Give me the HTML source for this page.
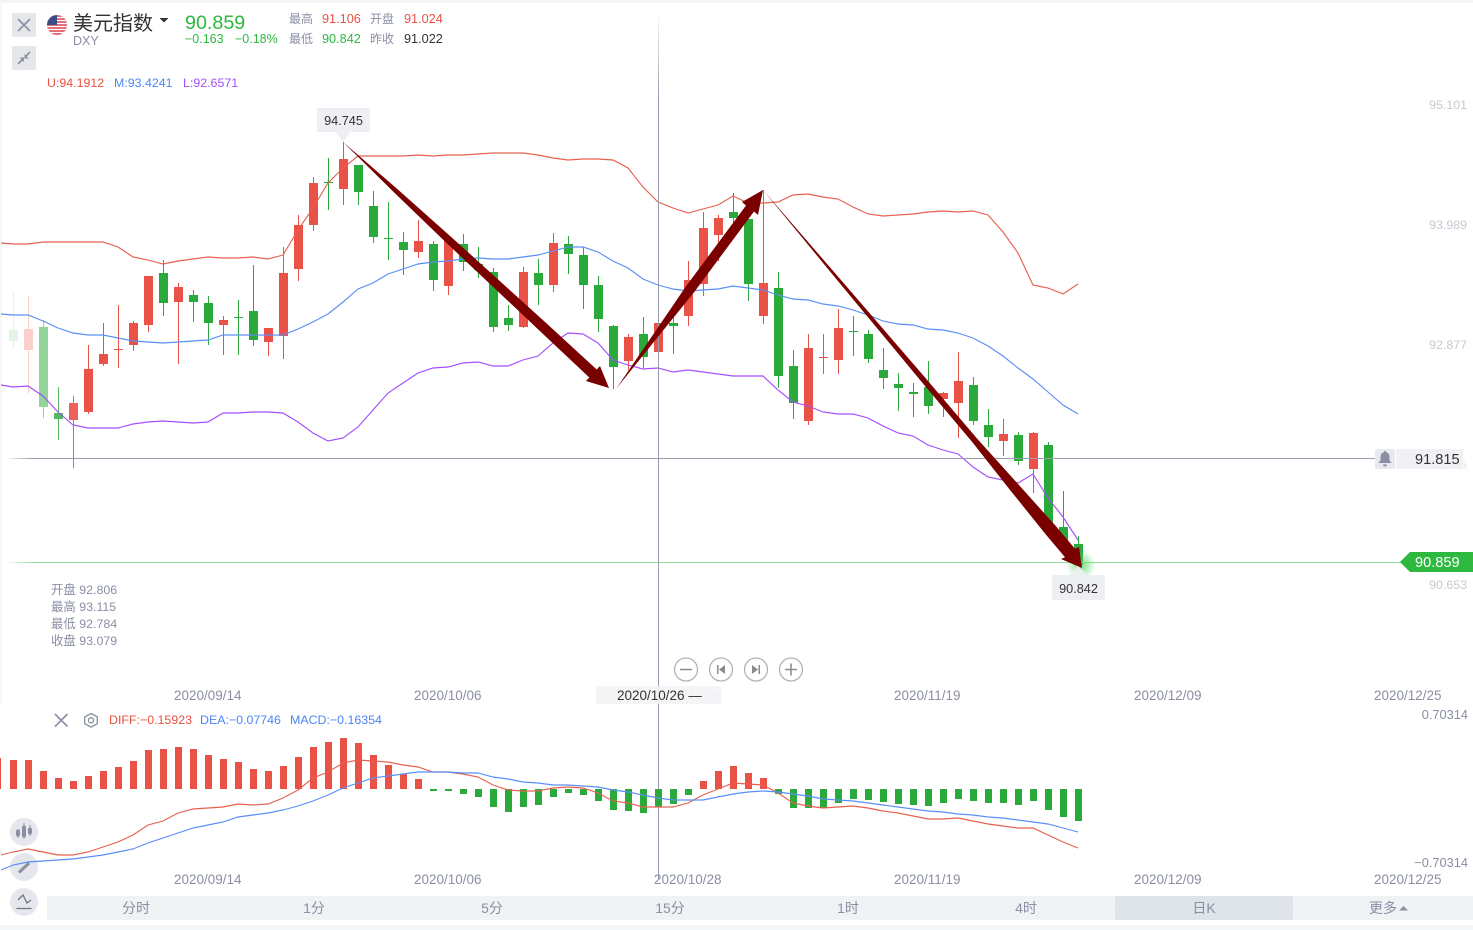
<!DOCTYPE html>
<html lang="zh">
<head>
<meta charset="utf-8">
<title>美元指数 DXY</title>
<style>
html,body{margin:0;padding:0;background:#fff;width:1473px;height:930px;overflow:hidden}
svg{position:absolute;left:0;top:0;display:block}
text{font-family:"Liberation Sans","Noto Sans CJK SC",sans-serif;font-size:12px}
.g{fill:#8a8fa3}.ax{fill:#c6c8d1;text-anchor:end;font-size:12.4px}.d{fill:#8a8fa3;font-size:13.5px}
.v{font-size:12.7px}.m{font-size:12.4px}.r{font-size:12.8px}
.t{fill:#8a8fa3;font-size:14px;text-anchor:middle}
.l{fill:none;stroke-width:1.15}
</style>
</head>
<body>
<svg width="1473" height="930" viewBox="0 0 1473 930" xmlns="http://www.w3.org/2000/svg">
<defs>
<linearGradient id="hg" x1="0" x2="1" y1="0" y2="0"><stop offset="0" stop-color="#9a9cae" stop-opacity="0"/><stop offset=".02" stop-color="#9a9cae"/><stop offset="1" stop-color="#9a9cae"/></linearGradient>
<linearGradient id="gg" x1="0" x2="1" y1="0" y2="0"><stop offset="0" stop-color="#8fe09a" stop-opacity="0"/><stop offset=".02" stop-color="#8fe09a"/><stop offset="1" stop-color="#8fe09a"/></linearGradient>
<linearGradient id="vg" x1="0" x2="0" y1="0" y2="1"><stop offset="0" stop-color="#9a9cae" stop-opacity="0"/><stop offset=".1" stop-color="#9a9cae"/><stop offset="1" stop-color="#9a9cae"/></linearGradient>
<radialGradient id="glow"><stop offset="0" stop-color="#4fd45f" stop-opacity=".75"/><stop offset="1" stop-color="#4fd45f" stop-opacity="0"/></radialGradient>
<clipPath id="fc"><circle cx="57" cy="25" r="10"/></clipPath>
</defs>

<rect width="1473" height="3" fill="#f3f4f7"/>
<rect y="925" width="1473" height="5" fill="#f5f6f8"/>
<rect width="2" height="705" fill="#f7f7fa"/>

<!-- header -->
<rect x="12" y="13" width="24" height="24" rx="2" fill="#e5e7eb"/>
<path d="M18 19L30 31M30 19L18 31" stroke="#8a8fa3" stroke-width="1.6" fill="none"/>
<rect x="12" y="46" width="24" height="24" rx="2" fill="#e5e7eb"/>
<path d="M18 64L22.5 59.5M30 52L25.5 56.5" stroke="#8a8fa3" stroke-width="1.6" fill="none"/>
<path d="M19.5 57.5L24 57.5 24 62zM28.5 58.5L24.5 58.5 24.5 54z" fill="#8a8fa3"/>
<g clip-path="url(#fc)">
<rect x="47" y="15" width="20" height="20" fill="#fff"/>
<path d="M47 16h20M47 19h20M47 22h20M47 25h20M47 28h20M47 31h20M47 34h20" stroke="#d8414e" stroke-width="1.6"/>
<rect x="47" y="15" width="10" height="10" fill="#3c4a86"/>
</g>
<text x="73" y="30" style="font-size:20px" fill="#333">美元指数</text>
<path d="M159.500 18h9l-4.500 4.500z" fill="#333"/>
<text x="73" y="45" class="g" style="font-size:12.500px">DXY</text>
<text x="185" y="29" style="font-size:19.700px" fill="#2db840">90.859</text>
<text x="185" y="43" style="font-size:12.500px" fill="#2db840">−0.163</text>
<text x="235" y="43" style="font-size:12.500px" fill="#2db840">−0.18%</text>
<text x="289" y="23" class="g">最高</text><text x="322" y="23" class="v" fill="#ea5147">91.106</text>
<text x="370" y="23" class="g">开盘</text><text x="404" y="23" class="v" fill="#ea5147">91.024</text>
<text x="289" y="43" class="g">最低</text><text x="322" y="43" class="v" fill="#2db840">90.842</text>
<text x="370" y="43" class="g">昨收</text><text x="404" y="43" class="v" fill="#333">91.022</text>
<text x="47" y="87" class="m" fill="#e8503f">U:94.1912</text>
<text x="114" y="87" class="m" fill="#4a86f7">M:93.4241</text>
<text x="183" y="87" class="m" fill="#a64dff">L:92.6571</text>

<!-- faded candles -->
<g fill="none">
<g stroke="#2aaa3a" opacity=".12"><path d="M13.500 292V348"/><path d="M13.500 330V341" stroke-width="9"/></g>
<g stroke="#ea5147" opacity=".28"><path d="M28.500 296V393"/><path d="M28.500 329V350" stroke-width="9"/></g>
<g stroke="#2aaa3a" opacity=".5"><path d="M43.500 320V418"/><path d="M43.500 327V407" stroke-width="9"/></g>
<g stroke="#2aaa3a" opacity=".8"><path d="M58.500 387V440"/><path d="M58.500 413V419" stroke-width="9"/></g>
<g stroke="#ea5147" opacity=".9"><path d="M73.500 396V468"/><path d="M73.500 403V420" stroke-width="9"/></g>
<!-- red wicks -->
<path stroke="#ea5147" d="M88.500 345V414M103.500 323V366M118.500 305V368M133.500 321V351M148.500 276V332M178.500 283V364M223.500 316V355M268.500 328V356M283.500 247V359M298.500 215V281M313.500 177V231M343.500 142V205M418.500 220V258M448.500 240V295M523.500 267V328M553.500 233V292M628.500 334V370M658.500 320V352M688.500 261V326M703.500 212V296M718.500 215V261M763.500 190V324M808.500 334V425M823.500 334V374M838.500 309V374M943.500 392V417M958.500 352V438M1003.500 419V456M1033.500 432V493"/>
<!-- red bodies -->
<path stroke="#ea5147" stroke-width="9" d="M88.500 369V412M103.500 354V364M118.500 349V350M133.500 323V345M148.500 276V325M178.500 287V302M223.500 320V325M268.500 328V342M283.500 273V336M298.500 225V269M313.500 183V225M343.500 159V189M418.500 241V252M448.500 240V286M523.500 272V327M553.500 243V285M628.500 337V361M658.500 323V352M688.500 280V316M703.500 228V284M718.500 218V235M763.500 283V316M808.500 348V421M823.500 357V358M838.500 328V360M943.500 393V399M958.500 381V403M1003.500 434V441M1033.500 433V469"/>
<!-- green wicks -->
<path stroke="#2aaa3a" d="M163.500 260V316M193.500 290V322M208.500 296V345M238.500 300V355M253.500 265V346M328.500 158V210M358.500 165V205M373.500 191V243M388.500 202V260M403.500 232V275M433.500 241V291M463.500 234V271M478.500 247V278M493.500 268V332M508.500 305V331M538.500 259V305M568.500 236V274M583.500 247V309M598.500 276V332M613.500 325V389M643.500 317V368M673.500 313V354M733.500 193V223M748.500 219V301M778.500 272V388M793.500 350V419M853.500 316V356M868.500 330V363M883.500 348V389M898.500 373V411M913.500 383V417M928.500 361V414M973.500 377V425M988.500 409V447M1018.500 432V465M1048.500 442V525M1063.500 491V548M1078.500 536V565"/>
<!-- green bodies -->
<path stroke="#2aaa3a" stroke-width="9" d="M163.500 273V303M193.500 295V302M208.500 303V323M238.500 317V318M253.500 311V340M328.500 182V183M358.500 165V192M373.500 206V237M388.500 238V239M403.500 242V250M433.500 244V280M463.500 244V262M478.500 264V270M493.500 272V327M508.500 318V325M538.500 273V285M568.500 244V254M583.500 255V285M598.500 285V319M613.500 326V367M643.500 334V357M673.500 323V326M733.500 212V218M748.500 219V284M778.500 288V376M793.500 366V403M853.500 331V332M868.500 334V359M883.500 370V378M898.500 384V388M913.500 392V394M928.500 387V406M973.500 385V421M988.500 425V437M1018.500 435V461M1048.500 445V525M1063.500 527V548M1078.500 544V565"/>
</g>

<!-- bands -->
<polyline class="l" stroke="#e8604f" points="1,243 13,244 28,244 43,242 58,242 73,242 88,242 103,242 118,247 133,257 148,260 163,264 178,261 193,259 208,257 223,258 238,258 253,257 268,259 283,255 298,230 313,208 328,183 343,168 358,156 373,156 388,156 403,156 418,155 433,156 448,155 463,155 478,154 493,153 508,153 523,153 538,155 553,158 568,160 583,159 598,159 613,160 628,168 643,187 658,202 673,208 688,213 703,209 718,205 733,196 748,203 763,203 778,202 793,195 808,194 823,197 838,199 853,207 868,214 883,216 898,215 913,214 928,212 943,211 958,212 973,211 988,215 1003,232 1018,253 1033,285 1048,288 1063,294 1078,284"/>
<polyline class="l" stroke="#5a8ff7" points="1,314 13,315 28,315 43,321 58,328 73,333 88,335 103,335 118,338 133,341 148,342 163,343 178,342 193,341 208,340 223,335 238,335 253,335 268,335 283,335 298,329 313,322 328,314 343,302 358,289 373,283 388,274 403,269 418,264 433,262 448,261 463,259 478,258 493,259 508,259 523,257 538,255 553,251 568,247 583,247 598,252 613,261 628,268 643,279 658,285 673,289 688,291 703,290 718,289 733,286 748,288 763,290 778,295 793,299 808,300 823,304 838,306 853,310 868,315 883,321 898,324 913,325 928,329 943,330 958,333 973,338 988,346 1003,356 1018,368 1033,379 1048,392 1063,405 1078,414"/>
<polyline class="l" stroke="#a64dff" points="1,385 13,387 28,386 43,396 58,412 73,425 88,428 103,428 118,428 133,424 148,422 163,421 178,422 193,423 208,422 223,413 238,413 253,412 268,412 283,413 298,422 313,433 328,441 343,438 358,427 373,410 388,393 403,383 418,373 433,368 448,367 463,363 478,362 493,366 508,366 523,360 538,356 553,343 568,333 583,334 598,343 613,360 628,365 643,369 658,368 673,372 688,370 703,372 718,374 733,376 748,376 763,376 778,390 793,402 808,406 823,412 838,414 853,414 868,418 883,426 898,433 913,436 928,445 943,450 958,454 973,467 988,477 1003,480 1018,483 1033,474 1048,498 1063,517 1078,540"/>

<!-- crosshairs and price lines -->
<rect x="5" y="458" width="1370" height="1" fill="url(#hg)"/>
<rect x="5" y="562" width="1396" height="1" fill="url(#gg)"/>
<rect x="658" y="10" width="1" height="870" fill="url(#vg)"/>

<circle cx="1081" cy="565" r="15" fill="url(#glow)"/>

<!-- drawn arrows -->
<polygon fill="#7a0000" points="343,142 397,188.800 453,238.600 546.400,323.300 596.700,369.500 600,366 609,388 586,381 589.300,377.500 539.600,330.700 448,244.400 394,192.400"/>
<polygon fill="#7a0000" points="616,389 661.600,322.100 685.700,286.700 746,205.500 742,202 763,190 758,215 754,211.500 693.700,292.700 666.800,325.900"/>
<polygon fill="#7a0000" points="763,190 840.100,279 925.700,378.300 977.100,438.600 1017.800,483.800 1055.600,525.800 1075,548.800 1079,547 1082,568 1061,559 1065,557.200 1045.600,534.200 1010.200,490.200 972.500,442.400 921.500,381.700 837.900,281"/>

<!-- tooltips -->
<path d="M317 108h53v24h-20l-7 10-7-10h-19z" fill="#eceef1" opacity=".95"/>
<text x="343.500" y="125" text-anchor="middle" class="v" fill="#333">94.745</text>
<path d="M1052 575h17l9-9 9 9h18v25h-53z" fill="#eceef1" opacity=".95"/>
<text x="1078.500" y="593" text-anchor="middle" class="v" fill="#333">90.842</text>

<!-- axis labels -->
<text x="1467" y="109" class="ax">95.101</text>
<text x="1467" y="229" class="ax">93.989</text>
<text x="1467" y="349" class="ax">92.877</text>
<text x="1467" y="589" class="ax">90.653</text>
<text x="1467" y="469" class="ax" opacity=".5">91.765</text>

<rect x="1375" y="449" width="20" height="20" rx="2" fill="#e8e9ee"/>
<path d="M1385 451a1.200 1.200 0 0 1 1.200 1.200c2.500.7 3.300 2.800 3.300 5v3l2 2.800h-13l2-2.800v-3c0-2.200.8-4.300 3.300-5A1.200 1.200 0 0 1 1385 451z" fill="#8a8fa3"/>
<path d="M1383 464.500h4a2 2 0 0 1-4 0z" fill="#8a8fa3"/>
<rect x="1396" y="449" width="67" height="20" fill="#eff0f4" opacity=".9"/>
<text x="1415" y="464" style="font-size:14.600px" fill="#333">91.815</text>
<polygon points="1400,562 1410,552 1473,552 1473,572 1410,572" fill="#2db840"/>
<text x="1415" y="567" style="font-size:14.600px" fill="#fff">90.859</text>

<!-- OHLC -->
<text x="51" y="594" class="g m">开盘 92.806</text>
<text x="51" y="611" class="g m">最高 93.115</text>
<text x="51" y="628" class="g m">最低 92.784</text>
<text x="51" y="645" class="g m">收盘 93.079</text>

<!-- nav buttons -->
<g fill="none" stroke="#b4b4b4" stroke-width="1.300">
<circle cx="686" cy="669.500" r="11.500"/><circle cx="721" cy="669.500" r="11.500"/><circle cx="756" cy="669.500" r="11.500"/><circle cx="791" cy="669.500" r="11.500"/>
</g>
<path d="M680 669.500h12M785 669.500h12M791 663.500v12" stroke="#8c8c8c" stroke-width="1.600" fill="none"/>
<path d="M717 665h1.500v9H717zM725 665v9l-6-4.500zM760 665h-1.500v9h1.500zM752 665v9l6-4.500z" fill="#8c8c8c"/>

<!-- date axis -->
<text x="174" y="700" class="d">2020/09/14</text>
<text x="414" y="700" class="d">2020/10/06</text>
<text x="654" y="700" class="d" opacity=".3">2020/10/28</text>
<rect x="596" y="686" width="125" height="18" fill="#f2f3f5" opacity=".85"/>
<text x="617" y="700" style="font-size:13.500px" fill="#333">2020/10/26 —</text>
<text x="894" y="700" class="d">2020/11/19</text>
<text x="1134" y="700" class="d">2020/12/09</text>
<text x="1374" y="700" class="d">2020/12/25</text>

<!-- MACD header -->
<path d="M55 714L67.500 726.500M67.500 714L55 726.500" stroke="#8a8fa3" stroke-width="1.600" fill="none"/>
<path d="M91 713.500l6.300 3.400v6.800l-6.300 3.400-6.300-3.400v-6.800z" fill="none" stroke="#8a8fa3" stroke-width="1.300"/>
<circle cx="91" cy="720.300" r="2.600" fill="none" stroke="#8a8fa3" stroke-width="1.300"/>
<text x="109" y="724" class="m" fill="#e8503f">DIFF:−0.15923</text>
<text x="200" y="724" class="m" fill="#4a86f7">DEA:−0.07746</text>
<text x="290" y="724" class="m" fill="#4a86f7">MACD:−0.16354</text>
<text x="1468" y="719" class="g r" text-anchor="end">0.70314</text>
<text x="1468" y="867" class="g r" text-anchor="end">−0.70314</text>

<!-- side buttons -->
<circle cx="24" cy="832" r="14" fill="#e5e7ec"/>
<circle cx="24" cy="867" r="14" fill="#e5e7ec"/>
<circle cx="24" cy="902" r="14" fill="#e5e7ec"/>
<g fill="#8a8fa3" stroke="#8a8fa3">
<rect x="16.500" y="830" width="3" height="6" rx="1.500"/>
<rect x="22.500" y="826" width="3" height="11" rx="1.500"/>
<rect x="28.500" y="828" width="3" height="6" rx="1.500"/>
<path d="M18 829v9M24 823v16M30 825v11" fill="none" stroke-width="1"/>
</g>
<path d="M19 872.500L29 863" stroke="#8a8fa3" stroke-width="3" fill="none"/>
<path d="M18 900l5-5 4 8 4-3M16.500 908.500h15" stroke="#6f7488" stroke-width="1.300" fill="none"/>

<!-- MACD histogram -->
<path fill="none" stroke="#ea5147" stroke-width="7" d="M-2.500 789V758M13.500 789V760M28.500 789V760M43.500 789V771M58.500 789V778M73.500 789V781M88.500 789V776M103.500 789V771M118.500 789V767M133.500 789V761M148.500 789V750M163.500 789V749M178.500 789V747M193.500 789V749M208.500 789V755M223.500 789V759M238.500 789V762M253.500 789V769M268.500 789V771M283.500 789V766M298.500 789V757M313.500 789V747M328.500 789V742M343.500 789V738M358.500 789V743M373.500 789V755M388.500 789V765M403.500 789V774M418.500 789V779M703.500 789V781M718.500 789V771M733.500 789V766M748.500 789V773M763.500 789V778"/>
<path fill="none" stroke="#2aaa3a" stroke-width="7" d="M433.500 789V791M448.500 789V791M463.500 789V794M478.500 789V797M493.500 789V807M508.500 789V812M523.500 789V807M538.500 789V805M553.500 789V797M568.500 789V793M583.500 789V795M598.500 789V801M613.500 789V810M628.500 789V811M643.500 789V813M658.500 789V807M673.500 789V804M688.500 789V795M778.500 789V794M793.500 789V808M808.500 789V808M823.500 789V808M838.500 789V803M853.500 789V799M868.500 789V800M883.500 789V802M898.500 789V804M913.500 789V805M928.500 789V806M943.500 789V803M958.500 789V799M973.500 789V801M988.500 789V803M1003.500 789V803M1018.500 789V805M1033.500 789V801M1048.500 789V810M1063.500 789V817M1078.500 789V821"/>
<polyline class="l" stroke="#e8604f" points="1,855 13,852 28,849 43,852 58,855 73,855 88,852 103,847 118,842 133,835 148,825 163,821 178,813 193,809 208,808 223,807 238,804 253,805 268,804 283,798 298,790 313,778 328,772 343,763 358,760 373,761 388,762 403,765 418,767 433,772 448,772 463,774 478,777 493,785 508,790 523,791 538,791 553,788 568,787 583,788 598,793 613,801 628,803 643,807 658,807 673,807 688,803 703,795 718,789 733,783 748,784 763,785 778,793 793,803 808,806 823,808 838,807 853,806 868,808 883,811 898,813 913,816 928,819 943,819 958,818 973,821 988,824 1003,826 1018,828 1033,828 1048,835 1063,842 1078,848"/>
<polyline class="l" stroke="#5a8ff7" points="1,870 13,865 28,862 43,861 58,860 73,859 88,857 103,855 118,852 133,849 148,843 163,838 178,833 193,828 208,825 223,822 238,817 253,815 268,813 283,810 298,806 313,801 328,795 343,788 358,783 373,778 388,776 403,774 418,772 433,772 448,772 463,773 478,773 493,777 508,779 523,782 538,783 553,785 568,785 583,786 598,787 613,790 628,792 643,795 658,798 673,800 688,800 703,800 718,797 733,794 748,792 763,791 778,792 793,794 808,796 823,799 838,800 853,801 868,803 883,805 898,807 913,809 928,811 943,812 958,814 973,815 988,817 1003,818 1018,820 1033,822 1048,824 1063,828 1078,832"/>

<!-- lower dates -->
<text x="174" y="884" class="d">2020/09/14</text>
<text x="414" y="884" class="d">2020/10/06</text>
<text x="654" y="884" class="d">2020/10/28</text>
<text x="894" y="884" class="d">2020/11/19</text>
<text x="1134" y="884" class="d">2020/12/09</text>
<text x="1374" y="884" class="d">2020/12/25</text>

<!-- tabs -->
<rect x="47" y="896" width="1426" height="24" fill="#f1f2f5"/>
<rect x="1115" y="896" width="178" height="24" rx="2" fill="#dfe3ea"/>
<text x="136" y="913" class="t">分时</text>
<text x="314" y="913" class="t">1分</text>
<text x="492" y="913" class="t">5分</text>
<text x="670" y="913" class="t">15分</text>
<text x="848" y="913" class="t">1时</text>
<text x="1026" y="913" class="t">4时</text>
<text x="1204" y="913" class="t">日K</text>
<text x="1383" y="913" class="t">更多</text>
<path d="M1399 910.500l4.500-4.500 4.500 4.500z" fill="#8a8fa3"/>
</svg>
</body>
</html>
